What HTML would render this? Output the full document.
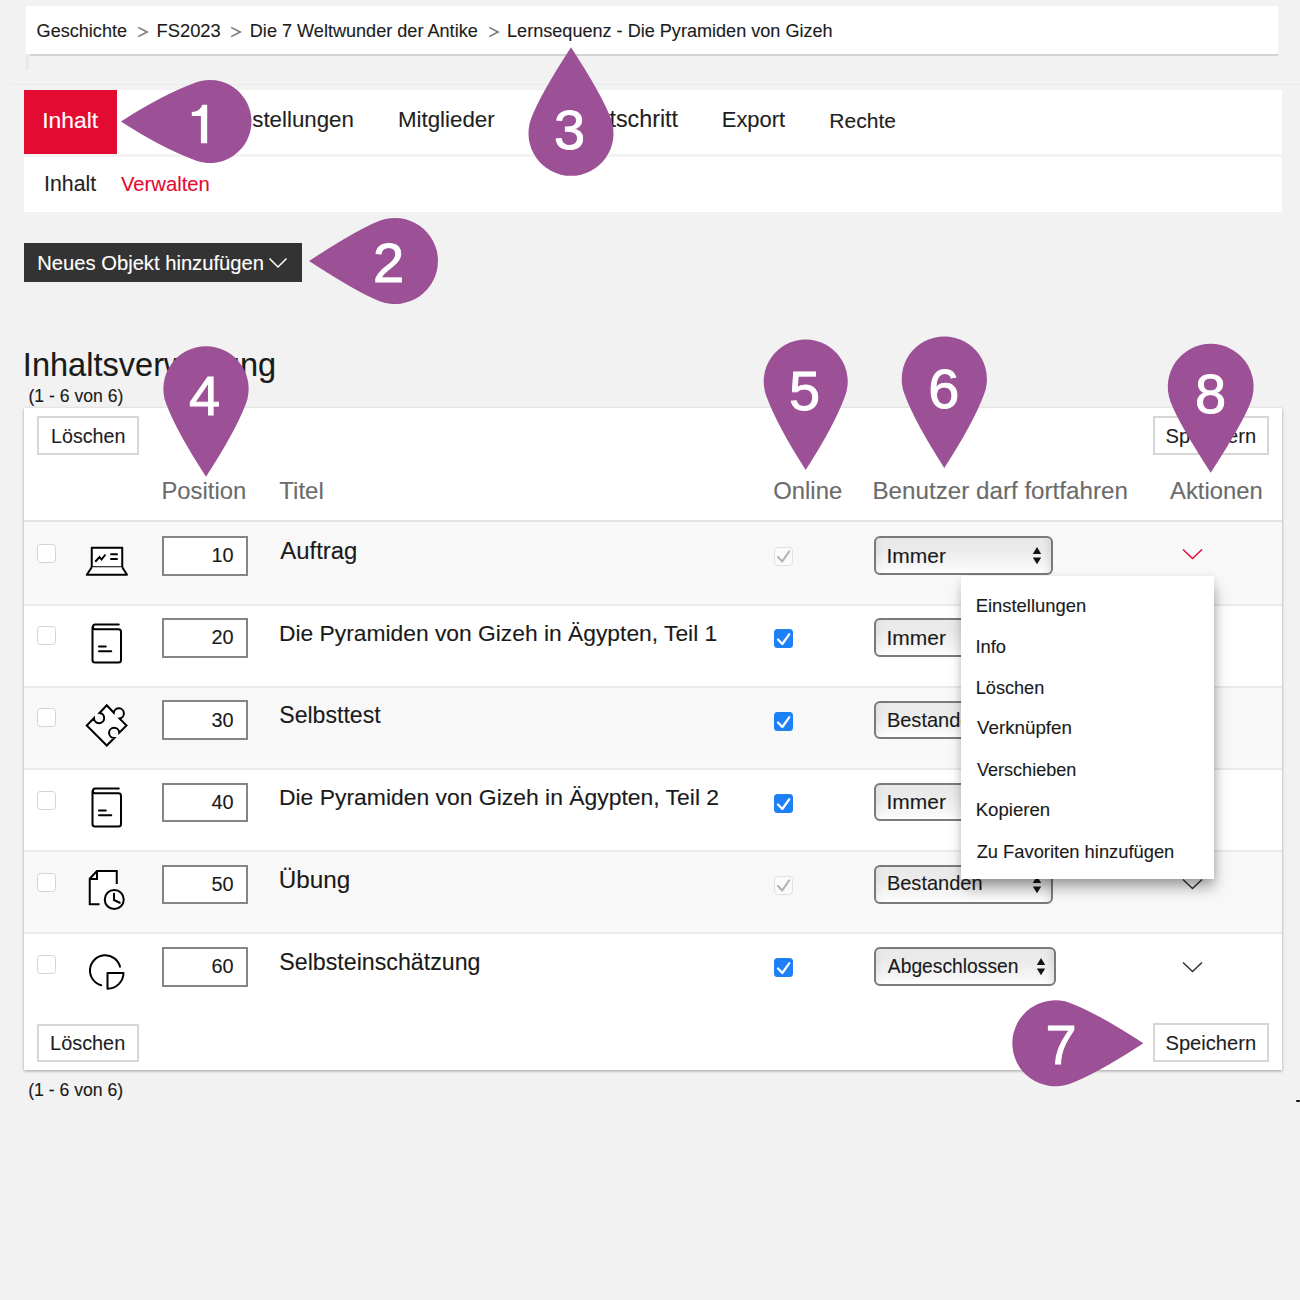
<!DOCTYPE html>
<html><head><meta charset="utf-8"><style>
*{margin:0;padding:0;box-sizing:border-box}
html,body{width:1300px;height:1300px;overflow:hidden;background:#f2f2f2;font-family:"Liberation Sans",sans-serif;color:#1f1f1f}
.a{position:absolute}
.t{position:absolute;white-space:nowrap;line-height:1;-webkit-text-stroke:0.12px currentColor}
#bc{left:26px;top:6px;width:1252px;height:48px;background:#fff;box-shadow:0 2px 1px -0.5px #d3d3d3}
#bcs{left:26px;top:55px;width:4px;height:15px;background:linear-gradient(90deg,#e4e4e4,#f2f2f2)}
#hl{left:10px;top:84px;width:1290px;height:1px;background:#eaeaea}
#tabs{left:24px;top:90px;width:1258px;height:63.5px;background:#fff}
#red{left:24px;top:90px;width:93px;height:63.5px;background:#e30b32}
#sub{left:24px;top:157px;width:1258px;height:55px;background:#fff}
#btn{left:24px;top:243px;width:277.5px;height:39px;background:#333}
#panel{left:24px;top:408px;width:1258px;height:662px;background:#fff;box-shadow:0 1px 3px rgba(0,0,0,.34)}
.gbtn{position:absolute;background:#fff;border:2px solid #d6d6d6}
.row{position:absolute;left:24px;width:1258px}
.g{background:#f8f8f8}
.bl{position:absolute;left:24px;width:1258px;height:2px;background:#e9e9e9}
.cb{position:absolute;left:37px;width:19px;height:19px;border:1px solid #d4d4d4;border-radius:3.5px;background:#fff}
.pi{position:absolute;left:162px;width:86px;height:39.5px;border:2px solid #858585;background:#fff}
.sel{position:absolute;left:874.2px;height:38.7px;border:2px solid #7a7a7a;border-radius:6px;background:linear-gradient(#e9e9e9,#ebebeb 35%,#f6f6f6 80%,#fefefe);box-shadow:inset -10px 0 8px -8px rgba(0,0,0,.10),inset 10px 0 8px -8px rgba(0,0,0,.06)}
#menu{left:961px;top:575.5px;width:253px;height:303.5px;background:#fff;box-shadow:2px 10px 14px -2px rgba(0,0,0,.34),0 2px 8px rgba(0,0,0,.1)}
</style></head><body>
<div class="a" id="bc"></div><div class="a" id="bcs"></div><div class="a" id="hl"></div>
<div class="t" style="left:36.6px;top:21.64px;font-size:18.08px;color:#1c1c1c">Geschichte</div>
<div class="t" style="left:156.53px;top:22.41px;font-size:18.34px;color:#1c1c1c">FS2023</div>
<div class="t" style="left:249.8px;top:21.62px;font-size:18.1px;color:#1c1c1c">Die 7 Weltwunder der Antike</div>
<div class="t" style="left:507.05px;top:21.63px;font-size:18.09px;color:#1c1c1c">Lernsequenz - Die Pyramiden von Gizeh</div>
<svg class="a" style="left:137px;top:25px" width="14" height="14"><path d="M1.2,2.4 L10.2,7 L1.2,11.6" fill="none" stroke="#777" stroke-width="1.55"/></svg>
<svg class="a" style="left:230px;top:25px" width="14" height="14"><path d="M1.2,2.4 L10.2,7 L1.2,11.6" fill="none" stroke="#777" stroke-width="1.55"/></svg>
<svg class="a" style="left:487.7px;top:25px" width="14" height="14"><path d="M1.2,2.4 L10.2,7 L1.2,11.6" fill="none" stroke="#777" stroke-width="1.55"/></svg>
<div class="a" id="tabs"></div><div class="a" id="red"></div><div class="a" id="sub"></div>
<div class="t" style="left:42.24px;top:108.88px;font-size:22.85px;color:#fff">Inhalt</div>
<div class="t" style="left:220.04px;top:108.84px;font-size:22.3px;color:#1f1f1f">Einstellungen</div>
<div class="t" style="left:397.91px;top:108.82px;font-size:22.33px;color:#1f1f1f">Mitglieder</div>
<div class="t" style="left:535.64px;top:108.0px;font-size:23.3px;color:#1f1f1f">Lernfortschritt</div>
<div class="t" style="left:721.74px;top:109.13px;font-size:21.96px;color:#1f1f1f">Export</div>
<div class="t" style="left:829.32px;top:109.91px;font-size:21.05px;color:#1f1f1f">Rechte</div>
<div class="t" style="left:44.09px;top:173.61px;font-size:21.28px;color:#1f1f1f">Inhalt</div>
<div class="t" style="left:120.9px;top:174.46px;font-size:20.28px;color:#e30b32">Verwalten</div>
<div class="a" id="btn"></div>
<div class="t" style="left:37.28px;top:253.04px;font-size:20.19px;color:#fff">Neues Objekt hinzuf&uuml;gen</div>
<svg class="a" style="left:265px;top:250px" width="26" height="24"><path d="M4.5,8.5 L13,17 L21.5,8.5" fill="none" stroke="#fff" stroke-width="1.5"/></svg>
<div class="t" style="left:22.87px;top:348.53px;font-size:32.56px;color:#1a1a1a">Inhaltsverwaltung</div>
<div class="t" style="left:28.44px;top:388.43px;font-size:17.61px;color:#1a1a1a">(1 - 6 von 6)</div>
<div class="a" id="panel"></div>
<div class="gbtn" style="left:37.2px;top:416.2px;width:101.8px;height:38.8px"></div>
<div class="t" style="left:51.03px;top:426.88px;font-size:19.67px;color:#1f1f1f">L&ouml;schen</div>
<div class="gbtn" style="left:1153.2px;top:416.2px;width:115.8px;height:38.8px"></div>
<div class="t" style="left:1165.49px;top:425.98px;font-size:20.14px;color:#1f1f1f">Speichern</div>
<div class="t" style="left:161.5px;top:479.26px;font-size:23.81px;color:#6b6b6b">Position</div>
<div class="t" style="left:279.32px;top:479.09px;font-size:24.01px;color:#6b6b6b">Titel</div>
<div class="t" style="left:773.31px;top:479.25px;font-size:23.82px;color:#6b6b6b">Online</div>
<div class="t" style="left:872.46px;top:478.94px;font-size:24.19px;color:#6b6b6b">Benutzer darf fortfahren</div>
<div class="t" style="left:1170.0px;top:479.24px;font-size:23.84px;color:#6b6b6b">Aktionen</div>
<div class="bl" style="top:520px;height:2px;background:#e3e3e3"></div>
<div class="row g" style="top:522.0px;height:82px"></div>
<div class="cb" style="top:544.0px"></div>
<div class="pi" style="top:536.0px"></div>
<div class="t" style="left:150px;width:83.65px;text-align:right;top:546.19px;font-size:19.9px;color:#1a1a1a">10</div>
<div class="t" style="left:280.3px;top:539.46px;font-size:23.92px;color:#1a1a1a">Auftrag</div>
<svg class="a" style="left:774px;top:547.4px" width="19" height="19"><rect x="0.5" y="0.5" width="18" height="18" rx="3.5" fill="#fbfbfb" stroke="#e0e0e0"/><path d="M4,10 L8.2,14.5 L15.2,4.3" fill="none" stroke="#b5b5b5" stroke-width="2.2" stroke-linecap="round" stroke-linejoin="round"/></svg>
<div class="sel" style="top:536.2px;width:178.5px"></div>
<div class="t" style="left:886.51px;top:544.56px;font-size:20.99px;color:#1a1a1a">Immer</div>
<svg class="a" style="left:1030.4px;top:546.0px" width="14" height="20"><path d="M2.8,8 L7,1.1 L11.2,8 Z M2.8,11.4 L7,18.3 L11.2,11.4 Z" fill="#141414"/></svg>
<svg class="a" style="left:1180px;top:546.0px" width="26" height="16"><path d="M3,3.5 L12.5,12.5 L22,3.5" fill="none" stroke="#e30b32" stroke-width="1.5"/></svg>
<div class="bl" style="top:604.0px"></div>
<div class="cb" style="top:626.2px"></div>
<div class="pi" style="top:618.2px"></div>
<div class="t" style="left:150px;width:83.65px;text-align:right;top:628.39px;font-size:19.9px;color:#1a1a1a">20</div>
<div class="t" style="left:278.97px;top:622.1px;font-size:22.82px;color:#1a1a1a">Die Pyramiden von Gizeh in &Auml;gypten, Teil 1</div>
<svg class="a" style="left:774px;top:629.4px" width="19" height="19"><rect x="0" y="0" width="19" height="19" rx="3.5" fill="#1d80f6"/><path d="M4,10.5 L8.3,15 L15.2,5.3" fill="none" stroke="#fff" stroke-width="2.3" stroke-linecap="round" stroke-linejoin="round"/></svg>
<div class="sel" style="top:618.4px;width:178.5px"></div>
<div class="t" style="left:886.51px;top:626.76px;font-size:20.99px;color:#1a1a1a">Immer</div>
<svg class="a" style="left:1030.4px;top:628.2px" width="14" height="20"><path d="M2.8,8 L7,1.1 L11.2,8 Z M2.8,11.4 L7,18.3 L11.2,11.4 Z" fill="#141414"/></svg>
<svg class="a" style="left:1180px;top:628.5px" width="26" height="16"><path d="M3,3.5 L12.5,12.5 L22,3.5" fill="none" stroke="#333" stroke-width="1.5"/></svg>
<div class="row g" style="top:686.2px;height:82px"></div>
<div class="bl" style="top:686.1px"></div>
<div class="cb" style="top:708.4px"></div>
<div class="pi" style="top:700.4px"></div>
<div class="t" style="left:150px;width:83.65px;text-align:right;top:710.59px;font-size:19.9px;color:#1a1a1a">30</div>
<div class="t" style="left:279.25px;top:704.17px;font-size:23.09px;color:#1a1a1a">Selbsttest</div>
<svg class="a" style="left:774px;top:711.6px" width="19" height="19"><rect x="0" y="0" width="19" height="19" rx="3.5" fill="#1d80f6"/><path d="M4,10.5 L8.3,15 L15.2,5.3" fill="none" stroke="#fff" stroke-width="2.3" stroke-linecap="round" stroke-linejoin="round"/></svg>
<div class="sel" style="top:700.6px;width:178.5px"></div>
<div class="t" style="left:886.9px;top:709.78px;font-size:20.02px;color:#1a1a1a">Bestanden</div>
<svg class="a" style="left:1030.4px;top:710.4px" width="14" height="20"><path d="M2.8,8 L7,1.1 L11.2,8 Z M2.8,11.4 L7,18.3 L11.2,11.4 Z" fill="#141414"/></svg>
<svg class="a" style="left:1180px;top:711.0px" width="26" height="16"><path d="M3,3.5 L12.5,12.5 L22,3.5" fill="none" stroke="#333" stroke-width="1.5"/></svg>
<div class="bl" style="top:768.2px"></div>
<div class="cb" style="top:790.6px"></div>
<div class="pi" style="top:782.6px"></div>
<div class="t" style="left:150px;width:83.65px;text-align:right;top:792.79px;font-size:19.9px;color:#1a1a1a">40</div>
<div class="t" style="left:278.97px;top:786.32px;font-size:22.91px;color:#1a1a1a">Die Pyramiden von Gizeh in &Auml;gypten, Teil 2</div>
<svg class="a" style="left:774px;top:793.8px" width="19" height="19"><rect x="0" y="0" width="19" height="19" rx="3.5" fill="#1d80f6"/><path d="M4,10.5 L8.3,15 L15.2,5.3" fill="none" stroke="#fff" stroke-width="2.3" stroke-linecap="round" stroke-linejoin="round"/></svg>
<div class="sel" style="top:782.8px;width:178.5px"></div>
<div class="t" style="left:886.51px;top:791.16px;font-size:20.99px;color:#1a1a1a">Immer</div>
<svg class="a" style="left:1030.4px;top:792.6px" width="14" height="20"><path d="M2.8,8 L7,1.1 L11.2,8 Z M2.8,11.4 L7,18.3 L11.2,11.4 Z" fill="#141414"/></svg>
<svg class="a" style="left:1180px;top:793.5px" width="26" height="16"><path d="M3,3.5 L12.5,12.5 L22,3.5" fill="none" stroke="#333" stroke-width="1.5"/></svg>
<div class="row g" style="top:850.4px;height:82px"></div>
<div class="bl" style="top:850.3px"></div>
<div class="cb" style="top:872.8px"></div>
<div class="pi" style="top:864.8px"></div>
<div class="t" style="left:150px;width:83.65px;text-align:right;top:874.99px;font-size:19.9px;color:#1a1a1a">50</div>
<div class="t" style="left:278.66px;top:867.96px;font-size:24.29px;color:#1a1a1a">&Uuml;bung</div>
<svg class="a" style="left:774px;top:876.2px" width="19" height="19"><rect x="0.5" y="0.5" width="18" height="18" rx="3.5" fill="#fbfbfb" stroke="#e0e0e0"/><path d="M4,10 L8.2,14.5 L15.2,4.3" fill="none" stroke="#b5b5b5" stroke-width="2.2" stroke-linecap="round" stroke-linejoin="round"/></svg>
<div class="sel" style="top:865.0px;width:178.5px"></div>
<div class="t" style="left:886.9px;top:873.28px;font-size:20.02px;color:#1a1a1a">Bestanden</div>
<svg class="a" style="left:1030.4px;top:874.8px" width="14" height="20"><path d="M2.8,8 L7,1.1 L11.2,8 Z M2.8,11.4 L7,18.3 L11.2,11.4 Z" fill="#141414"/></svg>
<svg class="a" style="left:1180px;top:876.0px" width="26" height="16"><path d="M3,3.5 L12.5,12.5 L22,3.5" fill="none" stroke="#333" stroke-width="1.5"/></svg>
<div class="bl" style="top:932.4px"></div>
<div class="cb" style="top:955.0px"></div>
<div class="pi" style="top:947.0px"></div>
<div class="t" style="left:150px;width:83.65px;text-align:right;top:957.19px;font-size:19.9px;color:#1a1a1a">60</div>
<div class="t" style="left:279.34px;top:950.89px;font-size:23.19px;color:#1a1a1a">Selbsteinsch&auml;tzung</div>
<svg class="a" style="left:774px;top:958.2px" width="19" height="19"><rect x="0" y="0" width="19" height="19" rx="3.5" fill="#1d80f6"/><path d="M4,10.5 L8.3,15 L15.2,5.3" fill="none" stroke="#fff" stroke-width="2.3" stroke-linecap="round" stroke-linejoin="round"/></svg>
<div class="sel" style="top:947.2px;width:181.6px"></div>
<div class="t" style="left:887.8px;top:956.69px;font-size:19.3px;color:#1a1a1a">Abgeschlossen</div>
<svg class="a" style="left:1033.5px;top:957.0px" width="14" height="20"><path d="M2.8,8 L7,1.1 L11.2,8 Z M2.8,11.4 L7,18.3 L11.2,11.4 Z" fill="#141414"/></svg>
<svg class="a" style="left:1180px;top:958.5px" width="26" height="16"><path d="M3,3.5 L12.5,12.5 L22,3.5" fill="none" stroke="#333" stroke-width="1.5"/></svg>
<svg class="a" style="left:75px;top:530px" width="65" height="60" viewBox="0 0 65 60"><g fill="none" stroke="#000" stroke-width="2" stroke-linejoin="round"><rect x="16.75" y="17.75" width="30.5" height="19.5" fill="#fff"/><path d="M16.75,37.25 L11.75,44.75 L52,44.75 L47.25,37.25" fill="#fff"/><path d="M20.25,31.75 L24.5,27 L26.5,29.5 L30.5,24.5" stroke-linejoin="miter"/><path d="M35.25,24.25 H42.75 M35.25,29 H42.75"/></g></svg>
<svg class="a" style="left:75px;top:612px" width="65" height="60" viewBox="0 0 65 60"><g fill="none" stroke="#000" stroke-width="2" stroke-linecap="round"><path d="M43.75,12.5 H20 A2.4,2.4 0 0 0 20,17.25 H43.5 A2.5,2.5 0 0 1 46,19.75 V48 A2.5,2.5 0 0 1 43.5,50.5 H20 A2.5,2.5 0 0 1 17.5,48 V15" fill="#fff"/><path d="M24,34.5 H30.75 M24,39.25 H36.25"/></g></svg>
<svg class="a" style="left:75px;top:692px" width="65" height="60" viewBox="0 0 65 60"><path d="M31.75,13.25 L38.75,20.75 A5.1,5.1 0 1 1 44.5,26.5 L51.5,33.5 L44.25,40.75 A5.1,5.1 0 1 0 39.25,46 L31.75,53.5 L11.75,33.5 L19,26 A5.1,5.1 0 1 0 24.5,21 Z" fill="#fff" stroke="#000" stroke-width="2" stroke-linejoin="miter"/></svg>
<svg class="a" style="left:75px;top:776px" width="65" height="60" viewBox="0 0 65 60"><g fill="none" stroke="#000" stroke-width="2" stroke-linecap="round"><path d="M43.75,12.5 H20 A2.4,2.4 0 0 0 20,17.25 H43.5 A2.5,2.5 0 0 1 46,19.75 V48 A2.5,2.5 0 0 1 43.5,50.5 H20 A2.5,2.5 0 0 1 17.5,48 V15" fill="#fff"/><path d="M24,34.5 H30.75 M24,39.25 H36.25"/></g></svg>
<svg class="a" style="left:75px;top:856px" width="65" height="60" viewBox="0 0 65 60"><g fill="none" stroke="#000" stroke-width="2"><path d="M24.5,48.25 H14.75 V22.75 L22,15 H41.75 V28" fill="#fff"/><path d="M22,15 V23 H14.75"/><circle cx="39.25" cy="43.5" r="9.5" fill="#fff"/><path d="M39,37.75 V44 L44.75,46.75" stroke-linecap="round"/></g></svg>
<svg class="a" style="left:75px;top:938px" width="65" height="60" viewBox="0 0 65 60"><g fill="none" stroke="#000" stroke-width="2"><path d="M45,28.75 A15.25,15.25 0 1 0 26.25,47.25" stroke-linecap="round"/><path d="M32.5,35 H48.5 A16,16 0 0 1 32.5,50.75 Z" fill="#fff" stroke-linejoin="round"/></g></svg>
<div class="gbtn" style="left:37.2px;top:1023.5px;width:101.8px;height:38.5px"></div>
<div class="t" style="left:50.11px;top:1034.32px;font-size:19.86px;color:#1f1f1f">L&ouml;schen</div>
<div class="gbtn" style="left:1153.2px;top:1023.2px;width:115.8px;height:38.8px"></div>
<div class="t" style="left:1165.49px;top:1033.18px;font-size:20.14px;color:#1f1f1f">Speichern</div>
<div class="t" style="left:28.14px;top:1082.0px;font-size:17.65px;color:#1a1a1a">(1 - 6 von 6)</div>
<div class="a" style="left:1296px;top:1100px;width:4px;height:2px;background:#111;border-radius:1px"></div>
<div class="a" id="menu"></div>
<div class="t" style="left:975.73px;top:596.56px;font-size:18.4px;color:#1a1a1a">Einstellungen</div>
<div class="t" style="left:975.42px;top:637.57px;font-size:18.4px;color:#1a1a1a">Info</div>
<div class="t" style="left:975.75px;top:678.79px;font-size:18.13px;color:#1a1a1a">L&ouml;schen</div>
<div class="t" style="left:977.01px;top:719.24px;font-size:18.78px;color:#1a1a1a">Verkn&uuml;pfen</div>
<div class="t" style="left:977.02px;top:760.86px;font-size:18.05px;color:#1a1a1a">Verschieben</div>
<div class="t" style="left:975.71px;top:801.37px;font-size:18.63px;color:#1a1a1a">Kopieren</div>
<div class="t" style="left:976.65px;top:842.62px;font-size:18.33px;color:#1a1a1a">Zu Favoriten hinzuf&uuml;gen</div>
<svg class="a" style="left:0;top:0" width="1300" height="1300">
<path transform="translate(210,121.5) rotate(-90) scale(41.5)" d="M0,-2.145 Q0.645,-1.152 0.940,-0.342 A1,1 0 1 1 -0.940,-0.342 Q-0.645,-1.152 0,-2.145 Z" fill="#9c5096"/>
<path d="M191.8,112 C196.5,111.6 200.5,110 202.3,104.7 L207.2,104.7 L207.2,143.2 L200.9,143.2 L200.9,116.1 L191.8,116.1 Z" fill="#fff"/>
<path transform="translate(395,261) rotate(-90) scale(43)" d="M0,-2.000 Q0.765,-0.822 0.940,-0.342 A1,1 0 1 1 -0.940,-0.342 Q-0.765,-0.822 0,-2.000 Z" fill="#9c5096"/>
<text x="388.65" y="281.55" font-size="56" fill="#fff" stroke="#fff" stroke-width="0.9" text-anchor="middle" font-family="Liberation Sans">2</text>
<path transform="translate(571,133.4) rotate(0) scale(42.5)" d="M0,-2.028 Q0.742,-0.886 0.940,-0.342 A1,1 0 1 1 -0.940,-0.342 Q-0.742,-0.886 0,-2.028 Z" fill="#9c5096"/>
<text x="569.6" y="148.95" font-size="56" fill="#fff" stroke="#fff" stroke-width="0.9" text-anchor="middle" font-family="Liberation Sans">3</text>
<path transform="translate(206,388.8) rotate(180) scale(42.6)" d="M0,-2.066 Q0.710,-0.972 0.940,-0.342 A1,1 0 1 1 -0.940,-0.342 Q-0.710,-0.972 0,-2.066 Z" fill="#9c5096"/>
<text x="204.7" y="415.45" font-size="56" fill="#fff" stroke="#fff" stroke-width="0.9" text-anchor="middle" font-family="Liberation Sans">4</text>
<path transform="translate(805.7,381.5) rotate(180) scale(42)" d="M0,-2.107 Q0.676,-1.065 0.940,-0.342 A1,1 0 1 1 -0.940,-0.342 Q-0.676,-1.065 0,-2.107 Z" fill="#9c5096"/>
<text x="804.65" y="409.95" font-size="56" fill="#fff" stroke="#fff" stroke-width="0.9" text-anchor="middle" font-family="Liberation Sans">5</text>
<path transform="translate(944.3,379) rotate(180) scale(42.6)" d="M0,-2.087 Q0.693,-1.020 0.940,-0.342 A1,1 0 1 1 -0.940,-0.342 Q-0.693,-1.020 0,-2.087 Z" fill="#9c5096"/>
<text x="943.85" y="407.65" font-size="56" fill="#fff" stroke="#fff" stroke-width="0.9" text-anchor="middle" font-family="Liberation Sans">6</text>
<path transform="translate(1055.3,1043.3) rotate(90) scale(43)" d="M0,-2.050 Q0.724,-0.936 0.940,-0.342 A1,1 0 1 1 -0.940,-0.342 Q-0.724,-0.936 0,-2.050 Z" fill="#9c5096"/>
<text x="1061.0" y="1063.55" font-size="56" fill="#fff" stroke="#fff" stroke-width="0.9" text-anchor="middle" font-family="Liberation Sans">7</text>
<path transform="translate(1210.7,386.7) rotate(180) scale(42.9)" d="M0,-2.007 Q0.759,-0.838 0.940,-0.342 A1,1 0 1 1 -0.940,-0.342 Q-0.759,-0.838 0,-2.007 Z" fill="#9c5096"/>
<text x="1210.6" y="412.85" font-size="56" fill="#fff" stroke="#fff" stroke-width="0.9" text-anchor="middle" font-family="Liberation Sans">8</text>
</svg>
</body></html>
